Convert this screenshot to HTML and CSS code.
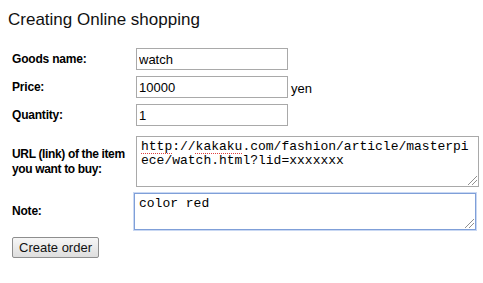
FILE: index.html
```html
<!DOCTYPE html>
<html>
<head>
<meta charset="utf-8">
<link rel="stylesheet" href="styles.css">
</head>
<body>
<h1 class="title">Creating Online shopping</h1>
<form class="order-form">
  <div class="row">
    <label class="label">Goods name:</label>
    <div class="field"><input class="text-input" type="text" value="watch"></div>
  </div>
  <div class="row">
    <label class="label">Price:</label>
    <div class="field"><input class="text-input" type="text" value="10000"><span class="unit">yen</span></div>
  </div>
  <div class="row">
    <label class="label">Quantity:</label>
    <div class="field"><input class="text-input" type="text" value="1"></div>
  </div>
  <div class="row row-url">
    <label class="label label-wide">URL (link) of the item<br>you want to buy:</label>
    <div class="field"><div class="area area-url">http://kakaku.com/fashion/article/masterpiece/watch.html?lid=xxxxxxx<span class="grip"></span></div></div>
  </div>
  <div class="row row-note">
    <label class="label">Note:</label>
    <div class="field"><div class="area area-note">color red<span class="grip"></span></div></div>
  </div>
  <div class="actions">
    <button class="btn" type="button">Create order</button>
  </div>
</form>
</body>
</html>
```
FILE: styles.css
```css
html, body {
  margin: 0;
  padding: 0;
  background: #ffffff;
}
body {
  padding: 8px;
  font-family: "Liberation Sans", Arial, sans-serif;
  color: #000;
}
.title {
  margin: 2px 0 0 0;
  font-size: 17px;
  font-weight: normal;
  line-height: 20px;
  color: #111;
}
.order-form {
  margin-top: 18px;
  padding-left: 4px;
}
.row {
  display: grid;
  grid-template-columns: 124px 1fr;
  align-items: center;
  margin-bottom: 6px;
}
.label {
  font-size: 12px;
  font-weight: bold;
  line-height: 15px;
  letter-spacing: -0.2px;
  white-space: nowrap;
}
.label-wide {
  letter-spacing: -0.35px;
}
.field {
  display: flex;
  align-items: center;
}
.text-input {
  box-sizing: border-box;
  width: 152px;
  height: 22px;
  margin: 0;
  padding: 0 2px;
  border: 1px solid #a9a9a9;
  font-family: "Liberation Sans", Arial, sans-serif;
  font-size: 13px;
  color: #000;
  background: #fff;
  outline: none;
}
.unit {
  font-size: 13px;
  margin-left: 3px;
  padding-top: 2px;
}
.row-url {
  margin-top: 10px;
}
.area {
  position: relative;
  box-sizing: border-box;
  width: 343px;
  border: 1px solid #a9a9a9;
  padding: 3px 4px;
  font-family: "Liberation Mono", "Courier New", monospace;
  font-size: 13px;
  line-height: 14px;
  word-break: break-all;
  color: #000;
  background: #fff;
}
.area-url {
  height: 51px;
}
.area-url::before,
.area-url::after {
  content: "";
  position: absolute;
  top: 16px;
  height: 1px;
  background-image: linear-gradient(90deg, #e04040 50%, transparent 50%);
  background-size: 2px 1px;
}
.area-url::before {
  left: 4px;
  width: 31px;
}
.area-url::after {
  left: 58px;
  width: 47px;
}
.area-note {
  height: 37px;
  width: 342px;
  margin-left: -2px;
  border: 1px solid #7f9fd8;
  box-shadow: 0 0 0 1px #c9d8f3;
}
.grip {
  position: absolute;
  right: 1px;
  bottom: 1px;
  width: 9px;
  height: 9px;
  background:
    linear-gradient(135deg, transparent 0 45%, #909090 45% 52%, transparent 52% 68%, #909090 68% 75%, transparent 75%);
}
.actions {
  margin-top: 7px;
}
.btn {
  box-sizing: border-box;
  width: 87px;
  height: 21px;
  margin: 0;
  padding: 0;
  border: 1px solid #8e8e8e;
  border-radius: 2px;
  background: linear-gradient(#f6f6f6, #dedede);
  font-family: "Liberation Sans", Arial, sans-serif;
  font-size: 13px;
  color: #111;
}
```
